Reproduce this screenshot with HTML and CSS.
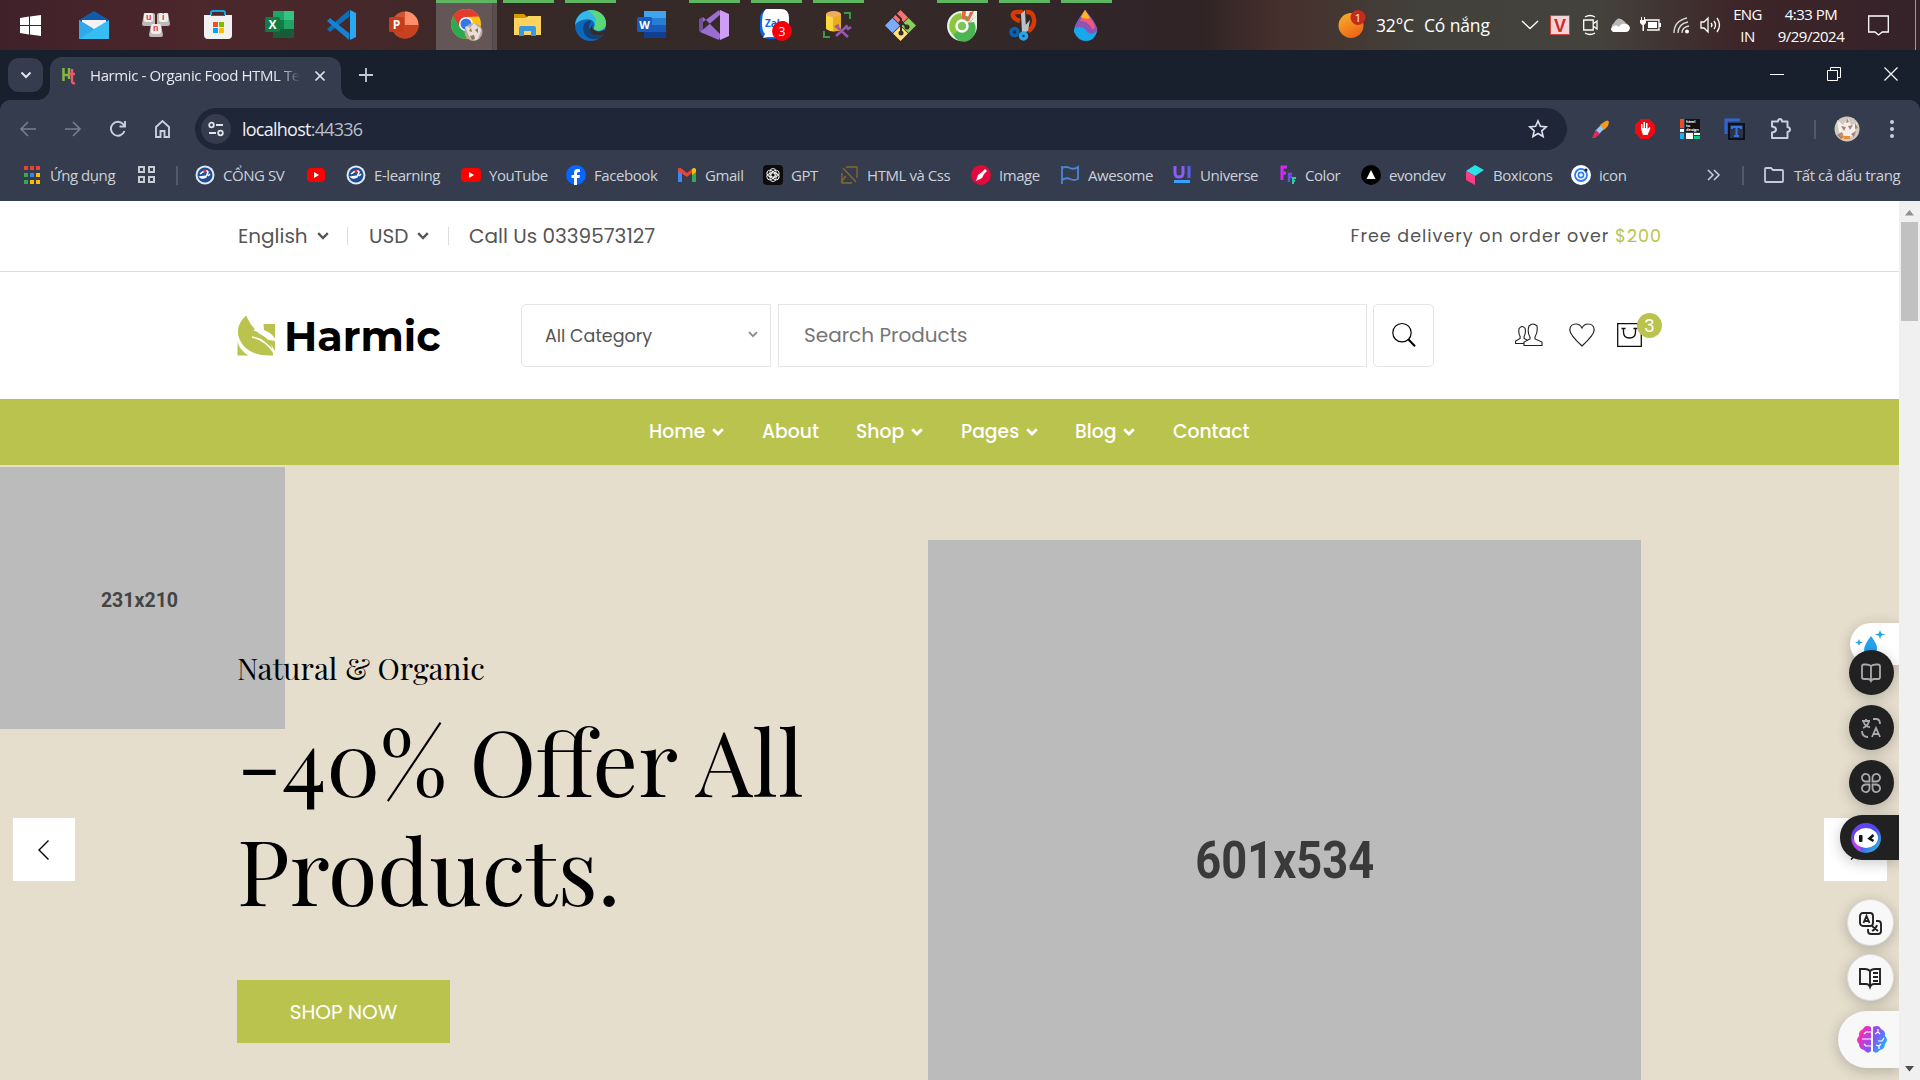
FILE: index.html
```html
<!DOCTYPE html>
<html lang="vi">
<head>
<meta charset="utf-8">
<title>Harmic - Organic Food HTML Template</title>
<link rel="stylesheet" href="styles.css">
</head>
<body>
<div class="taskbar">
  <div class="start"><svg width="21" height="21" viewBox="0 0 21 21" fill="#fff"><path d="M0 3 9 1.6V10H0zM10 1.4 21 0v10H10zM0 11h9v8.400L0 18zM10 11h11v10l-11-1.500z"/></svg></div>
  <div class="apps">
    <div class="app"><svg width="30" height="30" viewBox="0 0 30 30"><path d="M0 10 15 1l15 9-15 9z" fill="#0e5cab"/><path d="M3 10h24v10H3z" fill="#f3f3f3"/><path d="M0 10l30 19H0z" fill="#1a9ae8"/><path d="M30 10v19H0L15 19z" fill="#38bdf3"/><path d="M0 10v19L15 19z" fill="#2fa9ea"/></svg></div>
    <div class="app"><svg width="30" height="30" viewBox="0 0 30 30"><g fill="#bfb8b8"><path d="M3 3h9q2 0 2 2v9q0 2-2 2H3q-2 0-2-2zM18 3h9l2 11q0 2-2 2h-9q-2 0-2-2V5q0-2 2-2zM10 14h10l2 11q0 2-2 2H10q-2 0-2-2z"/></g><g fill="#f1eeee"><rect x="3" y="3" width="9" height="9" rx="2"/><rect x="18" y="3" width="9" height="9" rx="2"/><rect x="10" y="14" width="10" height="10" rx="2"/></g><g fill="#dd3a43" font-family="Liberation Sans" font-weight="700" font-size="9"><text x="5" y="10">u</text><text x="21" y="10">i</text><text x="12" y="21">n</text></g></svg></div>
    <div class="app"><svg width="30" height="30" viewBox="0 0 30 30"><path d="M8 7V3q0-2 2-2h10q2 0 2 2v4" fill="none" stroke="#19a5e5" stroke-width="2"/><path d="M1 5h28v20q0 4-4 4H5q-4 0-4-4z" fill="#f1f1f1"/><path d="M8 5v1h14V5" fill="#0f6fb5"/><path fill="#f25022" d="M10 12h5v5h-5z"/><path fill="#7fba00" d="M16 12h5v5h-5z"/><path fill="#00a4ef" d="M10 18h5v5h-5z"/><path fill="#ffb900" d="M16 18h5v5h-5z"/></svg></div>
    <div class="app"><svg width="30" height="30" viewBox="0 0 30 30"><path fill="#21a366" d="M8 1h11v9H8z"/><path fill="#33c481" d="M19 1h10v9H19z"/><path fill="#107c41" d="M8 10h11v9H8z"/><path fill="#21a366" d="M19 10h10v9H19z"/><path fill="#185c37" d="M8 19h21v9H8z"/><rect y="7" width="15" height="15" rx="1.500" fill="#107c41"/><text x="7.500" y="19" text-anchor="middle" font-family="Open Sans" font-weight="700" font-size="12" fill="#fff">X</text></svg></div>
    <div class="app"><svg width="30" height="30" viewBox="0 0 30 30"><path d="M23 0v30l6-3V3z" fill="#2aa8f2"/><path d="M22 7 3 22l-3-3L22 0z" fill="#0c6fb8"/><path d="M22 23 3 8l-3 3 22 19z" fill="#1484d2"/></svg></div>
    <div class="app"><svg width="30" height="30" viewBox="0 0 30 30"><circle cx="16" cy="15" r="13.500" fill="#d35230"/><path d="M16 1.500A13.500 13.500 0 0 1 29.500 15H16z" fill="#ff8f6b"/><path d="M29.500 15A13.500 13.500 0 0 1 2.500 15z" fill="#c8421f"/><rect y="7" width="15" height="15" rx="1.500" fill="#c43e1c"/><text x="7.500" y="19" text-anchor="middle" font-family="Open Sans" font-weight="700" font-size="12" fill="#fff">P</text></svg></div>
    <div class="app active"><svg width="31" height="32" viewBox="0 0 31 32"><circle cx="15" cy="15" r="15" fill="#fbc116"/><path d="M2 7.500A15 15 0 0 1 28 7.500L15 8 9 19z" fill="#e33b2e"/><path d="M2 7.500A15 15 0 0 0 15 30l6-11-6 3-6-4z" fill="#2da94f"/><circle cx="15" cy="15" r="7" fill="#fff"/><circle cx="15" cy="15" r="5.500" fill="#3478e8"/><circle cx="22.500" cy="23" r="9" fill="#b9a9a0"/><path d="M14 18q2-2 5 1l4-5 4 4q3 0 3 4l-3 8q-5 3-8-1z" fill="#e9dfd7"/><path d="M18 22l2-3 1 4zM24 21l3-2v5zM19 27l4-1 1 4-3 1z" fill="#8d7468"/></svg></div>
    <div class="app open"><svg width="30" height="30" viewBox="0 0 30 30"><path d="M1 4h10l3 3v4H1z" fill="#d99a00"/><path d="M1 8h12l2-2h13v19H1z" fill="#ffd35e"/><path d="M6 26v-8q0-2 2-2h13q2 0 2 2v8h-5v-5h-7v5z" fill="#3a97dd"/></svg></div>
    <div class="app open"><svg width="31" height="31" viewBox="0 0 30 30"><circle cx="15" cy="15" r="15" fill="#0c69b9"/><path d="M0 15C1-5 30-4 30 13c0 7-9 9-12 5 3-5-1-9-6-9C5 9 1 13 0 15z" fill="#35b8e8"/><path d="M15 0c9 0 15 6 15 13 0 7-9 9-12 5 4-8 2-14-6-17z" fill="#5ad87a"/><path d="M14 14c-2 7 5 13 12 10l3-2-1 2C23 31 8 30 8 18q0-8 8-8z" fill="#143f78"/><path d="M17 14q-2 6 6 7l7-2-1 4q-12 5-15-4z" fill="#352b2a"/></svg></div>
    <div class="app"><svg width="30" height="30" viewBox="0 0 30 30"><path fill="#41a5ee" d="M7 1h22v7H7z"/><path fill="#2b7cd3" d="M7 8h22v7H7z"/><path fill="#185abd" d="M7 15h22v7H7z"/><path fill="#103f91" d="M7 22h22v6H7z"/><rect y="7" width="15" height="15" rx="1.500" fill="#185abd"/><text x="7.500" y="18.500" text-anchor="middle" font-family="Open Sans" font-weight="700" font-size="11" fill="#fff">W</text></svg></div>
    <div class="app open"><svg width="30" height="30" viewBox="0 0 30 30"><path fill="#72519c" d="M0 9l4-2v16l-4-2z"/><path fill="#9a6dd0" d="M4 7l18 18-2 5L1 22l6-5 15-13-2-4L4 12z"/><path fill="#d09df4" d="M21 0l9 4v22l-9 4z"/><path fill="#352b2a" d="M20 10v10l-7-5z"/></svg></div>
    <div class="app open"><svg width="32" height="32" viewBox="0 0 32 32"><rect width="29" height="30" rx="9" fill="#0866e8"/><path d="M6 0h15q8 0 8 9v10q0 9-9 9H8L3 29l2-4Q2 22 2 14 2 3 6 0z" fill="#fff"/><text x="5" y="18" font-family="Open Sans" font-size="10" font-weight="700" fill="#0866e8">Zalo</text><circle cx="22" cy="22" r="10" fill="#f40008"/><text x="22" y="26.500" text-anchor="middle" font-family="Open Sans" font-size="12" fill="#fff">3</text></svg></div>
    <div class="app open"><svg width="30" height="30" viewBox="0 0 30 30"><path d="M3 4v15q8 5 15 0V4z" fill="#ffd83e"/><path d="M10 4v17h8V4z" fill="#e8ad1e"/><ellipse cx="10.500" cy="4" rx="7.500" ry="3" fill="#f0aa62"/><path d="M21 3h6v6M7 27H1v-6" fill="none" stroke="#3c9a44" stroke-width="2"/><path d="M13 26 24 16M14 17l11 10M12 17l4-2M23 15l2 4 3-2" stroke="#9a55b8" stroke-width="2.500" fill="none"/></svg></div>
    <div class="app"><svg width="31" height="31" viewBox="0 0 31 31"><path d="M15.500 0 23 7.500 15.500 15 8 7.500z" fill="#f37474"/><path d="M23.500 8 31 15.500 23.500 23 16 15.500z" fill="#8dce5a"/><path d="M7.500 8 15 15.500 7.500 23 0 15.500z" fill="#7cabfa"/><path d="M15.500 16 23 23.500 15.500 31 8 23.500z" fill="#ffe27c"/><path d="M11 4l5 5v15M16 12l6 5" fill="none" stroke="#352b2a" stroke-width="2"/><circle cx="16" cy="13" r="2.500" fill="#352b2a"/><circle cx="22" cy="17" r="2.500" fill="#352b2a"/><circle cx="16" cy="23" r="2.500" fill="#352b2a"/></svg></div>
    <div class="app open"><svg width="31" height="31" viewBox="0 0 31 31"><path d="M30 1v14A15 15 0 1 1 15 1z" fill="#e9f5e6"/><path d="M22 7A12 13 0 1 0 27 12l-8 1z" fill="#4db452"/><path d="M14 3A13 13 0 0 0 6 25l6-5V11l4-2z" fill="#8cc63f"/><path d="M15 1h4l-1 10-3 1zM27 1l-5 10-3 1 4-10zM30 5l-7 7-2 1z" fill="#f26245"/><circle cx="15" cy="16" r="5.500" fill="#7bc75c" stroke="#fff" stroke-width="2.500"/></svg></div>
    <div class="app open"><svg width="30" height="32" viewBox="0 0 30 32"><path d="M14 3H8Q3 3 4 7q1 3 7 5M17 3q7-1 8 7 1 8-6 12" fill="none" stroke="#d83b01" stroke-width="4.500"/><path d="M12 5l4-4 1 20-4 3zM13 20l8-9-2 11-5 2z" fill="#bcc3c8"/><circle cx="5.500" cy="23" r="3.500" fill="none" stroke="#0864b0" stroke-width="3.500"/><circle cx="14.500" cy="27" r="3" fill="none" stroke="#26a5ec" stroke-width="3.500"/></svg></div>
    <div class="app open"><svg width="30" height="31" viewBox="0 0 30 31"><path d="M14 0q14 17 12 22-3 9-11 9T3 22Q2 16 14 0z" fill="#16a9ec"/><path d="M14 0q13 15 12 21-7 6-11-1-4-5-11-2 1-6 10-18z" fill="#8b54b8"/><path d="M14 0l8 12q4 8-1 7-4-8-12-8z" fill="#f45879"/><path d="M14 0l5 8q-4 2-9-1z" fill="#ffb81a"/></svg></div>
  </div>
  <div class="tray">
    <svg width="28" height="30" viewBox="0 0 28 30"><defs><linearGradient id="sun" x2=".6" y2="1"><stop stop-color="#f5b52d"/><stop offset="1" stop-color="#ee6516"/></linearGradient></defs><circle cx="13" cy="15.500" r="12.500" fill="url(#sun)"/><circle cx="20" cy="7.500" r="7.500" fill="#c42b1c"/><text x="20" y="11.500" text-anchor="middle" font-family="Open Sans" font-size="11" fill="#fff">1</text></svg>
    <span>32°C</span><span>Có nắng</span>
    <svg width="16" height="10" viewBox="0 0 16 10"><path d="M0 1l8 7.500L16 1" fill="none" stroke="#fff" stroke-width="1.400"/></svg>
    <svg width="20" height="20" viewBox="0 0 20 20"><rect x=".5" y=".5" width="19" height="19" fill="#f3d5d5" stroke="#cf4545"/><text x="10" y="16.500" text-anchor="middle" font-family="Liberation Sans" font-size="18" font-weight="700" fill="#cc2c2c">V</text></svg>
    <svg width="16" height="20" viewBox="0 0 16 20"><path d="M2 2q5-3 10 0M2 18q5 3 10 0M.7 5h9.500v10H.7zM10 9l4-3v8l-4-3" fill="none" stroke="#fff" stroke-width="1.300"/></svg>
    <svg width="20" height="14" viewBox="0 0 20 14"><path d="M4 13a4.500 4.500 0 0 1 0-8Q8-3 14 3l5 5v5z" fill="#b9b9b9"/><path d="M3 14q-4-3 0-5.500 3-2 6 .5 2-4 6-3 4 0 5 4-1 4-4 4z" fill="#fff"/></svg>
    <svg width="21" height="16" viewBox="0 0 21 16"><path d="M5 3h14v10H7" fill="none" stroke="#fff" stroke-width="1.300"/><path d="M8 5h9v6H8zM19 6h2v4h-2zM0 3h6v3L4 8H2L0 6zM1 0h1v3H1zM4 0h1v3H4zM2.500 8H4v6H2.500z" fill="#fff"/></svg>
    <svg width="17" height="17" viewBox="0 0 17 17"><path d="M1 16Q1 4 14 1M5 16Q5 7 15 5M9 16q0-6 7-7" fill="none" stroke="#ddd" stroke-width="1.300"/><circle cx="14" cy="14.500" r="2" fill="#fff"/></svg>
    <svg width="21" height="18" viewBox="0 0 21 18"><path d="M1 6h3l4-4v14l-4-4H1zM11 7q2 2 0 4M14 5q3 4 0 8M17 2q5 7 0 14" fill="none" stroke="#fff" stroke-width="1.300"/></svg>
    <div class="two">ENG<br>IN</div>
    <div class="two">4:33 PM<br>9/29/2024</div>
    <svg class="note" width="21" height="21" viewBox="0 0 21 21"><path d="M.7 1h19.600v16h-6L10.500 20 7 17H.7z" fill="none" stroke="#fff" stroke-width="1.300"/></svg>
    <i class="peek"></i>
  </div>
</div>

<div class="tabstrip">
  <div class="tabsearch"><svg width="12" height="8" viewBox="0 0 12 8"><path d="M1.500 1.500 6 6l4.500-4.500" fill="none" stroke="#dfe3ea" stroke-width="2"/></svg></div>
  <div class="tab">
    <svg width="14" height="18" viewBox="0 0 14 18"><path d="M1.500 1v13M1.500 8h5M7 1v11" stroke="#85b83b" stroke-width="2.500" fill="none"/><path d="M10 2v12q0 3 3 2M7 7h6" stroke="#f3556a" stroke-width="2.500" fill="none"/></svg>
    <span class="tabtitle">Harmic - Organic Food HTML Template</span>
    <svg width="12" height="12" viewBox="0 0 12 12"><path d="M1.500 1.500l9 9M10.500 1.500l-9 9" stroke="#e3e6ec" stroke-width="1.700"/></svg>
  </div>
  <svg class="plus" width="14" height="14" viewBox="0 0 14 14"><path d="M7 0v14M0 7h14" stroke="#c3cbd9" stroke-width="1.800"/></svg>
  <div class="winbtns">
    <svg width="14" height="14" viewBox="0 0 14 14"><path d="M0 7.500h14" stroke="#fff"/></svg>
    <svg width="14" height="14" viewBox="0 0 14 14"><path d="M.5 3.500h10v10H.5zM3.500 3V.5h10v10H11" fill="none" stroke="#fff"/></svg>
    <svg width="14" height="14" viewBox="0 0 14 14"><path d="M.5.5l13 13M13.500.5l-13 13" stroke="#fff" stroke-width="1.200"/></svg>
  </div>
</div>

<div class="toolbar">
  <div class="tools">
    <svg width="20" height="20" viewBox="0 0 20 20"><path d="M18 10H3M10 3l-7 7 7 7" fill="none" stroke="#757e8e" stroke-width="1.700"/></svg>
    <svg width="20" height="20" viewBox="0 0 20 20"><path d="M2 10h15M10 3l7 7-7 7" fill="none" stroke="#757e8e" stroke-width="1.700"/></svg>
    <svg width="20" height="20" viewBox="0 0 20 20"><path d="M16.500 12a7 7 0 1 1-1-6.500L17 7M17 2v5.500h-5.500" fill="none" stroke="#c7d0df" stroke-width="1.900"/></svg>
    <svg width="20" height="20" viewBox="0 0 20 20"><path d="M3 18V8l6.500-6L16 8v10h-4.500v-6h-4v6z" fill="none" stroke="#c7d0df" stroke-width="1.900"/></svg>
  </div>
  <div class="omnibox">
    <i class="site"><svg width="16" height="16" viewBox="0 0 16 16" fill="none" stroke="#dfe3ea" stroke-width="1.800"><circle cx="3.500" cy="4" r="2.300"/><path d="M8 4h7M1 12h7"/><circle cx="12.500" cy="12" r="2.300"/></svg></i>
    <span class="url">localhost<b>:44336</b></span>
    <svg class="star" width="20" height="20" viewBox="0 0 20 20"><path d="M10 2l2.400 5.300 5.800.6-4.400 3.900 1.300 5.700L10 14.500l-5.100 3 1.300-5.700L1.800 7.900l5.800-.6z" fill="none" stroke="#dfe3ea" stroke-width="1.600"/></svg>
  </div>
  <div class="exts">
    <svg width="22" height="22" viewBox="0 0 22 22"><path d="M5 13l7-7 3.500 3.500-7 7z" fill="#8fc9f5"/><path d="M6 12l4 4-5 4H2z" fill="#dd2c62"/><path d="M10 7l4-3q4-3 5 0l-1 4-4 4z" fill="#f89a1c"/></svg>
    <svg width="22" height="22" viewBox="0 0 22 22"><path d="M7 1h8l6 6v8l-6 6H7l-6-6V7z" fill="#ef0b12"/><path d="M7 11V6h1.500v4h1V4H11v6h1V5h1.500v6l2-2 1 1-3 7H9z" fill="#fff"/></svg>
    <svg width="22" height="22" viewBox="0 0 22 22"><path fill="#f04b23" d="M1 1h4v9H1z"/><path fill="#111" d="M6 1h15v13H6z"/><path fill="#fff" d="M1 11h4v3H1zM7 15h7v6H7zM15 15h6v2h-6z"/><path fill="#1aaef5" d="M1 15h4v6H1z"/><path fill="#0acf83" d="M15 18h6v3h-6z"/><g fill="#fff" font-family="Open Sans" font-weight="700" font-size="4"><text x="7" y="5">html</text><text x="7" y="9">to</text><text x="7" y="13">design</text></g></svg>
    <svg width="22" height="22" viewBox="0 0 22 22"><path d="M2 16V2h14" fill="none" stroke="#2e66d8" stroke-width="3"/><rect x="5" y="6" width="15" height="15" fill="#2b3345" stroke="#0d111b" stroke-width="2"/><path d="M8 11V9h9v2M12.500 9v9M10 18h5" fill="none" stroke="#3472e4" stroke-width="2"/></svg>
    <svg width="22" height="22" viewBox="0 0 22 22"><path d="M2 3.500h6q0-2.500 2-2.500t2 2.500h5.500V9q2.500.5 2.500 2.500T17.500 14v6H2v-5.500q4-.5 4-3t-4-3z" fill="none" stroke="#c7d0df" stroke-width="2" stroke-linejoin="round"/></svg>
    <i class="sep"></i>
    <svg width="26" height="26" viewBox="0 0 26 26"><circle cx="13" cy="13" r="12.500" fill="#d3c8be"/><path d="M3 4l6 5 5-7 3 7 6-2-3 12-9 4-6-7z" fill="#f4efea"/><path d="M7 10l5 1-2 4zM14 10l5-1-3 5zM3 19l5-3 2 5-3 2zM17 18l5-3-2 6zM13 2l2 4-3 1zM21 7l3 5-3 1z" fill="#a58377"/><path d="M5 20l3-3 1 4zM10 20h6v3h-6z" fill="#e88f35"/></svg>
    <svg width="6" height="20" viewBox="0 0 6 20" fill="#c7d0df"><circle cx="3" cy="3" r="2"/><circle cx="3" cy="10" r="2"/><circle cx="3" cy="17" r="2"/></svg>
  </div>
</div>

<div class="bookmarks">
  <a><svg class="bi" viewBox="0 0 20 20"><path fill="#ea4335" d="M2 1h4v4H2zM8 1h4v4H8zM14 1h4v4h-4z"/><path fill="#34a853" d="M2 8h4v4H2zM2 15h4v4H2z"/><path fill="#2e88f0" d="M8 8h4v4H8z"/><path fill="#fbbc05" d="M14 8h4v4h-4zM8 15h4v4H8zM14 15h4v4h-4z"/></svg>Ứng dụng</a>
  <a><svg class="bi" viewBox="0 0 20 20" fill="none" stroke="#c9ccd3" stroke-width="2"><path d="M1 2h5v5H1zM11 2h5v5h-5zM1 12h5v5H1zM11 12h5v5h-5z"/></svg></a>
  <i class="sep"></i>
  <a><svg class="bi" viewBox="0 0 20 20"><circle cx="10" cy="10" r="9.500" fill="#dfe9f5"/><circle cx="10" cy="10" r="7.500" fill="#1d4d96"/><path d="M5 9q6-5 8-2l-2 5q-4 2-6 0l7-1M13 11l2-2" stroke="#fff" stroke-width="1.600" fill="none"/><circle cx="10" cy="6" r="1.600" fill="#e33"/></svg>CỔNG SV</a>
  <a><svg class="bi" viewBox="0 0 20 20"><rect x="1" y="3" width="18" height="14" rx="4" fill="#f00"/><path d="M8 7l5 3-5 3z" fill="#fff"/></svg></a>
  <a><svg class="bi" viewBox="0 0 20 20"><circle cx="10" cy="10" r="9.500" fill="#dfe9f5"/><circle cx="10" cy="10" r="7.500" fill="#1d4d96"/><path d="M5 9q6-5 8-2l-2 5q-4 2-6 0l7-1M13 11l2-2" stroke="#fff" stroke-width="1.600" fill="none"/><circle cx="10" cy="6" r="1.600" fill="#e33"/></svg>E-learning</a>
  <a><svg class="bi" viewBox="0 0 20 20"><rect y="3" width="20" height="14" rx="4" fill="#f00"/><path d="M8 7l5 3-5 3z" fill="#fff"/></svg>YouTube</a>
  <a><svg class="bi" viewBox="0 0 20 20"><circle cx="10" cy="10" r="10" fill="#0866ff"/><path d="M8 20v-7H5.500v-3H8V8q0-4 3.500-4 2 0 2.500.3V7h-1.500Q11 7 11 8.500V10h3l-.5 3H11v7z" fill="#fff"/></svg>Facebook</a>
  <a><svg class="bi" viewBox="0 0 20 20"><path d="M1 5v12h4V8z" fill="#4285f4"/><path d="M19 5v12h-4V8z" fill="#34a853"/><path d="M1 3.500Q3 2 5 4l5 4 5-4 1 3-6 5-9-6z" fill="#ea4335"/><path d="M15 4q2-2 4 0v3l-4 3z" fill="#fbbc05"/></svg>Gmail</a>
  <a><svg class="bi" viewBox="0 0 20 20"><rect width="20" height="20" rx="4" fill="#0c0c0c"/><g fill="none" stroke="#fff" stroke-width=".9"><path id="petal" d="M10 3.500a3 3 0 0 1 3 3v4l-3 1.800M10 3.500a3 3 0 0 0-3 2.800v3.500"/><use href="#petal" transform="rotate(60 10 10)"/><use href="#petal" transform="rotate(120 10 10)"/><use href="#petal" transform="rotate(180 10 10)"/><use href="#petal" transform="rotate(240 10 10)"/><use href="#petal" transform="rotate(300 10 10)"/></g></svg>GPT</a>
  <a><svg class="bi" viewBox="0 0 20 20"><path d="M7 2h11v11M3 8v10h10M4 3l13 14M2 17l5-6" fill="none" stroke="#86692b" stroke-width="1.300"/></svg>HTML và Css</a>
  <a><svg class="bi" viewBox="0 0 20 20"><circle cx="10" cy="10" r="10" fill="#e4093c"/><path d="M5 16l2-6 4-3 3-3 2 2-3 3-2 4z" fill="#fff"/></svg>Image</a>
  <a><svg class="bi" viewBox="0 0 20 20"><path d="M2 1v18M2 3q4-2 8 0t8-1v12q-4 2-8 0t-8 1" fill="none" stroke="#4a83d0" stroke-width="1.900"/></svg>Awesome</a>
  <a><svg class="bi" viewBox="0 0 20 20"><path d="M3 1v7q0 4 4 4t4-4V1" fill="none" stroke="#8b5cf6" stroke-width="3"/><path d="M17 1v12" stroke="#5b5df2" stroke-width="3"/><path d="M2 15h16v3H2z" fill="#3aa0ff"/></svg>Universe</a>
  <a><svg class="bi" viewBox="0 0 20 20"><path d="M5 15V2h5M5 8h4" stroke="#d02bf0" stroke-width="3" fill="none"/><path d="M12 17V9h3M12 12h3" stroke="#6b4cf0" stroke-width="2.400" fill="none"/><path d="M16 19v-6h3M16 16h2" stroke="#26cfa5" stroke-width="2" fill="none"/></svg>Color</a>
  <a><svg class="bi" viewBox="0 0 20 20"><circle cx="10" cy="10" r="10" fill="#000"/><path d="M10 5l4.500 9h-9z" fill="#fff"/></svg>evondev</a>
  <a><svg class="bi" viewBox="0 0 20 20"><path d="M10 0l9 5-9 6-9-5z" fill="#2be0e6"/><path d="M1 6l9 5v9l-9-5z" fill="#fd3c84"/></svg>Boxicons</a>
  <a><svg class="bi" viewBox="0 0 20 20"><circle cx="10" cy="10" r="10" fill="#fff"/><circle cx="10" cy="10" r="6" fill="none" stroke="#327af0" stroke-width="1.800"/><circle cx="10" cy="10" r="2.600" fill="none" stroke="#327af0" stroke-width="1.600"/><circle cx="15" cy="5" r="1.500" fill="#123"/></svg>icon</a>
  <a><svg width="13" height="12" viewBox="0 0 13 12"><path d="M0 1l5 5-5 5M6 1l5 5-5 5" fill="none" stroke="#c7cbd4" stroke-width="1.600"/></svg></a>
  <i class="sep"></i>
  <a><svg class="bi" viewBox="0 0 20 20"><path d="M1 4q0-1 1-1h5l2 2h9q1 0 1 1v10q0 1-1 1H2q-1 0-1-1z" fill="none" stroke="#c7cbd4" stroke-width="1.800"/></svg><span class="allmarks">Tất cả dấu trang</span></a>
</div>

<div class="viewport">
  <div class="site-page">
    <div class="topbar">
      <div class="prefs">
        <span class="lang">English<svg class="chev" viewBox="0 0 12 8"><path d="M1.200 1.200 6 6l4.800-4.800"/></svg></span>
        <span class="cur">USD<svg class="chev" viewBox="0 0 12 8"><path d="M1.200 1.200 6 6l4.800-4.800"/></svg></span>
        <span class="call">Call Us 0339573127</span>
      </div>
      <div class="promo">Free delivery on order over <b>$200</b></div>
    </div>
    <div class="header">
      <div class="logo">
        <svg width="40" height="41" viewBox="0 0 40 41"><path d="M.5 40.500V27q2 8 11 13.500zM26.500 9H38v15q-3-6-11-9z" fill="#bac34e"/><path d="M9 .5q5 11 13 18 14 6 14 22-18 1-28-8-8-9-7-18Q2 7 9 .5z" fill="#bac34e"/><path d="M38 26v10q-4-8-11-12z" fill="#bac34e"/><path d="M15 22q13 2 23 17M17 15q12 2 21 9" fill="none" stroke="#fff" stroke-width="1.500"/></svg>
        <span>Harmic</span>
      </div>
      <div class="search">
        <div class="cat"><span>All Category</span><svg width="10" height="7" viewBox="0 0 12 8"><path d="M1.200 1.200 6 6l4.800-4.800" fill="none" stroke="#8d8d8d" stroke-width="2.400"/></svg></div>
        <div class="query">Search Products</div>
        <div class="go"><svg width="24" height="24" viewBox="0 0 24 24" fill="none" stroke="#000"><circle cx="10" cy="9.700" r="9.200" stroke-width="1.200"/><path d="M16.500 16.500 23 23.300" stroke-width="2"/></svg></div>
      </div>
      <div class="usericons">
        <svg width="28" height="24" viewBox="0 0 28 24" fill="#fff" stroke="#222" stroke-width="1.100"><path d="M.6 20.500V18l4.500-2.500v-2q-2-4-1-8 3-4 6 0 1 4-1 8v2l4 2v3z"/><path d="M9 22.500V19l6-3v-2q-3-5-1-11 4-4 8 0 1 6-2 11v2l7 3v3.500z"/></svg>
        <svg width="26" height="24" viewBox="0 0 26 24" fill="none" stroke="#222" stroke-width="1.200"><path d="M13 23Q1 12 .8 7 1 1 7 1q4 0 6 4 2-4 6-4 6 0 6.200 6Q25 12 13 23z"/></svg>
        <div class="bag"><svg width="25" height="24" viewBox="0 0 25 24" fill="none" stroke="#111" stroke-width="1.300"><path d="M.7.7h23.600v22.600H.7z"/><path d="M6.500 5v4q0 6 6 6t6-6V5M4.500 5.500h4M16.500 5.500h4"/></svg><span class="count">3</span></div>
      </div>
    </div>
    <div class="nav">
      <span>Home<svg class="chev" viewBox="0 0 12 8"><path d="M1.200 1.200 6 6l4.800-4.800"/></svg></span>
      <span>About</span>
      <span>Shop<svg class="chev" viewBox="0 0 12 8"><path d="M1.200 1.200 6 6l4.800-4.800"/></svg></span>
      <span>Pages<svg class="chev" viewBox="0 0 12 8"><path d="M1.200 1.200 6 6l4.800-4.800"/></svg></span>
      <span>Blog<svg class="chev" viewBox="0 0 12 8"><path d="M1.200 1.200 6 6l4.800-4.800"/></svg></span>
      <span>Contact</span>
    </div>
    <div class="hero">
      <div class="decor"><span>231x210</span></div>
      <div class="copy">
        <div class="eyebrow">Natural &amp; Organic</div>
        <h1>-40% Offer All<br>Products.</h1>
        <div class="cta">SHOP NOW</div>
      </div>
      <div class="picture"><span>601x534</span></div>
      <div class="arrow prev"><svg width="12" height="20" viewBox="0 0 12 20"><path d="M10.500.5 1 10l9.500 9.500" fill="none" stroke="#000" stroke-width="1.400"/></svg></div>
      <div class="arrow next"><svg width="12" height="20" viewBox="0 0 12 20"><path d="M1 .5l9.500 9.500L1 19.500" fill="none" stroke="#000" stroke-width="1.400"/></svg></div>
    </div>
    <div class="dock">
      <div class="drop"><svg width="29" height="28" viewBox="0 0 29 28" fill="#23a3ee"><path d="M15 6q7 9 6 14-2 6-7 6-6 0-6-6 0-5 7-14z"/><path d="M24 0l1.200 3.300L29 4.500l-3.800 1.200L24 9l-1.200-3.300L19 4.500l3.800-1.200zM3 9l1 2.500 3 1-3 1L3 16l-1-2.500-3-1 3-1z"/></svg></div>
      <div class="dark"><svg width="20" height="20" viewBox="0 0 20 20"><path d="M10 3v14M10 3Q8 1.500 5 1.500H3q-2 0-2 2V14q0 2 2 2h4q2 0 3 2 1-2 3-2h4q2 0 2-2V3.500q0-2-2-2h-2q-3 0-5 1.500z"/></svg></div>
      <div class="dark"><svg width="20" height="20" viewBox="0 0 20 20"><path d="M1 3h8M5 1v2M2 10q5-2 6-7M2.500 4q2 5 6.500 5M12 1h3q4 0 4 5M1 13q0 6 6 6M11 19l4-9 4 9M12.500 16h5"/></svg></div>
      <div class="dark"><svg width="20" height="20" viewBox="0 0 20 20"><path d="M8.500 8.500H5A3.800 3.800 0 1 1 8.500 5zM11.500 8.500H15A3.800 3.800 0 1 0 11.500 5zM8.500 11.500H5A3.800 3.800 0 1 0 8.500 15zM11.500 11.500H15a3.800 3.800 0 1 1-3.500 3.500z"/></svg></div>
      <div class="bot"><svg width="30" height="30" viewBox="0 0 30 30"><defs><linearGradient id="ring" y2="1" x2="1"><stop stop-color="#7b3bf5"/><stop offset=".5" stop-color="#4a4af0"/><stop offset="1" stop-color="#25d3d8"/></linearGradient></defs><circle cx="15" cy="15" r="15" fill="url(#ring)"/><path d="M1 15a14 14 0 0 0 10 14L8 22z" fill="#c044e0"/><ellipse cx="15" cy="15" rx="12" ry="10" fill="#fff"/><rect x="8" y="12" width="3.500" height="7" rx="1" fill="#111"/><path d="M22.500 12l-4 3.500 4 2.500" fill="none" stroke="#111" stroke-width="2.600"/></svg></div>
      <div class="light"><svg width="24" height="24" viewBox="0 0 24 24"><rect x="2" y="2" width="13" height="13" rx="3"/><path d="M5.500 12l3-7 3 7M6.500 10h4M18 10h2q3 0 3 3v7q0 3-3 3h-7q-3 0-3-3v-2M14 15l6 5M19 14q-1 4-5 6"/></svg></div>
      <div class="light"><svg width="24" height="22" viewBox="0 0 24 22"><path d="M12 4Q10 2 7 2H2v15h6q3 0 4 3 1-3 4-3h6V2h-5q-3 0-5 2zM12 4v15M15 6h5M15 10h5M15 14h5"/></svg></div>
      <div class="brain"><svg width="30" height="29" viewBox="0 0 30 29"><defs><linearGradient id="br" x2="1" y2=".5"><stop stop-color="#f99a2b"/><stop offset=".25" stop-color="#f02cc0"/><stop offset=".65" stop-color="#8455f2"/><stop offset="1" stop-color="#2fa3ff"/></linearGradient></defs><path d="M14 2Q8-1 6 4 1 6 2 11q-4 4 0 8 0 5 5 6 4 5 7 1zM16 2q6-3 8 2 5 2 4 7 4 4 0 8 0 5-5 6-4 5-7 1z" fill="url(#br)"/><path d="M14 7H9L7 9M14 14H5M14 21H9l-2-2M18 9l3-2 2 2M21 7V4M21 16h4l2-3M19 20l3 1 2-2M22 21v3" fill="none" stroke="#fff" stroke-width="1.200"/></svg></div>
    </div>
  </div>
  <div class="scrollbar">
    <svg width="9" height="6" viewBox="0 0 9 6"><path d="M0 5.500 4.500 0 9 5.500z" fill="#8f8f8f"/></svg>
    <i class="thumb"></i>
    <svg class="down" width="9" height="6" viewBox="0 0 9 6"><path d="M0 0h9L4.500 5.500z" fill="#4d4d4d"/></svg>
  </div>
</div>
</body>
</html>
```
FILE: styles.css
```css
* { box-sizing: border-box; }
body { margin: 0; width: 1920px; height: 1080px; overflow: hidden; font-family: "Segoe UI", "Open Sans", "Noto Sans", sans-serif; }
svg { display: block; flex: none; overflow: visible; }
i { font-style: normal; display: block; }
b { font-weight: inherit; }

/* Windows taskbar */
.taskbar { display: flex; height: 50px; color: #fff; background: linear-gradient(90deg, #40212a 0, #4c272b 200px, #45282a 380px, #362927 520px, #352a28 900px, #302428 1150px, #302426 1200px, #46302c 1280px, #42413b 1420px, #44423c 1600px, #3d2528 1740px, #35232a 1920px); }
.start { width: 63px; padding: 15px 0 0 20px; }
.apps { display: flex; flex: none; }
.app { width: 62px; height: 50px; display: flex; align-items: center; justify-content: center; background: linear-gradient(#60b560, #60b560) 50% 0 / 0 3px no-repeat; }
.app.open { background-size: 51px 3px; }
.app.active { background: linear-gradient(#60b560, #60b560) 1px 0 / 61px 3px no-repeat, linear-gradient(90deg, transparent 1px, #645656 1px, #645656 57px, #51474a 57px, #51474a 58px, #5a4d4f 58px); }
.tray { margin-left: 221px; display: grid; align-items: center; grid-template-columns: 38px 48px 98px 28px 33px 27px 30px 33px 27px 31px 42px 95px 47px 2px; font-size: 17.500px; white-space: nowrap; }
.tray span { letter-spacing: -.15px; }
.two { width: 33px; font-size: 15px; line-height: 22px; text-align: center; letter-spacing: -.6px; margin-top: -1px; }
.two + .two { width: 76px; letter-spacing: -.5px; }
.note { justify-self: start; }
.peek { width: 1px; height: 50px; background: #a09a9a; }

/* browser window */
.tabstrip { display: flex; height: 50px; background: #18202e; align-items: flex-start; }
.tabsearch { width: 35px; height: 34px; margin: 8px 7px 0 8px; border-radius: 11px; background: #343c4d; display: flex; align-items: center; justify-content: center; }
.tab { position: relative; width: 291px; height: 43px; margin-top: 7px; padding: 0 14px 6px 12px; border-radius: 12px 12px 0 0; background: #343c4d; display: flex; align-items: center; }
.tab::before, .tab::after { content: ""; position: absolute; bottom: 0; width: 12px; height: 12px; }
.tab::before { left: -12px; background: radial-gradient(circle at 0 0, transparent 11.500px, #343c4d 12px); }
.tab::after { right: -12px; background: radial-gradient(circle at 100% 0, transparent 11.500px, #343c4d 12px); }
.tabtitle { width: 210px; margin: -2px 14px 0 14px; font-size: 15px; letter-spacing: -.4px; color: #e6e8ee; white-space: nowrap; overflow: hidden; -webkit-mask: linear-gradient(90deg, #000 190px, transparent 210px); mask: linear-gradient(90deg, #000 190px, transparent 210px); }
.plus { margin: 18px 0 0 18px; }
.winbtns { display: flex; gap: 43px; margin: 17px 22px 0 auto; }
.toolbar { height: 53px; display: flex; align-items: center; padding: 8px 25px 3px 18px; background: radial-gradient(circle at 10px 10px, #343c4d 9.500px, #18202e 10px) 0 0 / 10px 10px no-repeat, radial-gradient(circle at 0 10px, #343c4d 9.500px, #18202e 10px) 100% 0 / 10px 10px no-repeat, #343c4d; }
.tools { display: flex; gap: 25px; width: 177px; }
.omnibox { width: 1372px; height: 42px; border-radius: 21px; background: #1e2637; display: flex; align-items: center; padding: 0 19px 0 6px; }
.site { width: 30px; height: 30px; border-radius: 50%; background: #343c4d; display: flex; align-items: center; justify-content: center; }
.url { margin-left: 11px; font-size: 18px; letter-spacing: -.75px; color: #eef0f4; }
.url b { color: #b9bfca; }
.star { margin-left: auto; }
.exts { flex: 1; margin-left: 23px; display: grid; align-items: center; grid-template-columns: 44px 45px 45px 46px 44px 20px 55px 6px; }
.sep { width: 2px; height: 19px; background: #515a6b; }
.bookmarks { height: 48px; padding: 0 0 4px 22px; background: #343c4d; display: grid; align-items: center; grid-template-columns: 116px 38px 19px 111px 40px 115px 105px 111px 86px 76px 132px 89px 112px 105px 84px 104px 106px 137px 34px 22px 1fr; color: #cdd1d9; font-size: 15px; letter-spacing: -.43px; line-height: 20px; white-space: nowrap; }
.bookmarks a { display: flex; align-items: center; gap: 8px; }
.bi { width: 20px; height: 20px; }
.allmarks { margin-left: 2px; }

/* storefront */
.viewport { display: flex; height: 879px; }
.site-page { position: relative; width: 1899px; height: 879px; overflow: hidden; background: #fff; font-family: Poppins, Inter, sans-serif; color: #555; }
.scrollbar { width: 21px; background: #f0f0f0; display: flex; flex-direction: column; align-items: center; padding: 9px 0 8px; }
.thumb { width: 17px; height: 99px; margin-top: 6px; background: #c1c1c1; }
.down { margin-top: auto; }
.chev { display: inline-block; width: 12px; height: 8px; margin-left: 9px; vertical-align: 3px; fill: none; stroke: currentColor; stroke-width: 2.400; }
.topbar { height: 71px; padding: 0 237px; border-bottom: 1px solid #dcdcdc; display: flex; align-items: center; justify-content: space-between; font-size: 20px; white-space: nowrap; }
.prefs { display: flex; align-items: center; line-height: 18px; }
.lang { width: 111px; padding-left: 1px; border-right: 1px solid #ddd; }
.cur { width: 101px; padding-left: 21px; border-right: 1px solid #ddd; }
.call { padding-left: 20px; }
.promo { font-size: 17.500px; letter-spacing: 1px; }
.promo b { color: #bac34e; }
.header { height: 127px; padding: 0 237px; display: flex; align-items: center; }
.logo { width: 284px; display: flex; align-items: center; gap: 7px; color: #000; font: 700 41.300px/50px Montserrat, Poppins, sans-serif; }
.search { display: flex; gap: 6px; }
.search > div { height: 63px; border: 1px solid #e5e5e5; display: flex; align-items: center; }
.search > .cat { width: 250px; margin-right: 1px; padding: 0 12px 2px 23px; justify-content: space-between; border-radius: 5px 0 0 5px; font-size: 17.500px; }
.cat span { padding-top: 3px; }
.search > .query { width: 589px; padding: 0 0 2px 25px; font-size: 20px; color: #757575; }
.search > .go { width: 61px; padding-bottom: 1px; justify-content: center; border-radius: 5px; }
.usericons { display: flex; margin: -1px 0 0 81px; gap: 26px; }
.bag { position: relative; margin-left: -4px; }
.count { position: absolute; left: 20px; top: -10px; width: 25px; height: 25px; border-radius: 50%; background: #bac34e; color: #fff; font-size: 17.500px; line-height: 26px; text-align: center; }
.nav { height: 66px; padding: 0 0 1px 649px; background: #bac34e; color: #fff; display: grid; grid-template-columns: 113px 94px 105px 114px 98px 80px; align-items: center; font-size: 18.750px; font-weight: 500; white-space: nowrap; }
.nav .chev { margin-left: 7px; vertical-align: 2px; stroke-width: 2.800; }
.hero { position: relative; height: 615px; background: #e5decd; display: flex; justify-content: space-between; padding: 75px 258px 0 237px; }
.decor { position: absolute; left: 0; top: 2px; width: 285px; height: 262px; background: #bbb; display: flex; align-items: center; justify-content: center; color: #444; font: 700 21px Roboto, sans-serif; }
.decor span { transform: translate(-3px, 2px) scaleX(.93); }
.picture { width: 713px; height: 640px; flex: none; background: #bbb; display: flex; align-items: center; justify-content: center; color: #3a3a3a; font: 700 52px Roboto, sans-serif; }
.picture span { transform: scaleX(.87); }
.copy { position: relative; padding-top: 108px; width: 640px; color: #000; font-family: "Playfair Display", "Liberation Serif", serif; white-space: nowrap; }
.eyebrow { font-size: 30px; line-height: 40px; }
h1 { margin: 18px 0 0; font-size: 90px; font-weight: 400; line-height: 109px; }
.cta { margin-top: 56px; width: 213px; height: 63px; background: #bac34e; color: #fff; font: 20px/65px Poppins, Inter, sans-serif; text-align: center; }
.arrow { position: absolute; top: 353px; width: 62px; height: 63px; background: #fff; display: flex; align-items: center; justify-content: center; }
.prev { left: 13px; }
.next { right: 12px; width: 63px; }

/* floating extension buttons over the page */
.dock { position: absolute; right: 0; top: 422px; width: 62px; display: flex; flex-direction: column; align-items: flex-end; }
.dock > div { flex: none; display: flex; align-items: center; justify-content: center; box-shadow: 0 3px 14px rgba(0, 0, 0, .22); }
.drop { width: 49px; height: 42px; border-radius: 21px 0 0 21px; background: #fff; margin-bottom: -15px; padding-right: 9px; }
.dark { position: relative; width: 45px; height: 45px; border-radius: 50%; background: #212121; margin: 0 5px 10px 0; }
.dark svg { fill: none; stroke: #a9a9b0; stroke-width: 1.800; margin-right: 2px; }
.bot { width: 59px; height: 45px; border-radius: 22px 0 0 22px; background: #212121; padding-right: 7px; margin-bottom: 39px; position: relative; }
.light { width: 47px; height: 47px; border-radius: 50%; background: #f8f8f8; border: 1px solid #ddd; margin: 0 5px 8px 0; }
.light svg { fill: none; stroke: #222; stroke-width: 1.900; margin-right: 2px; }
.brain { width: 61px; height: 57px; margin-top: 2px; border-radius: 29px 0 0 29px; background: #f8f8f8; padding-left: 6px; }
```
